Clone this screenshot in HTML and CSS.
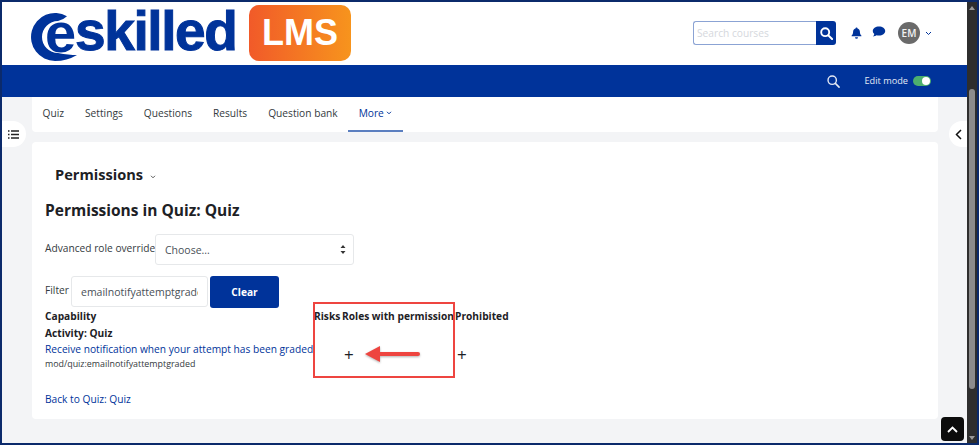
FILE: index.html
```html
<!DOCTYPE html>
<html lang="en">
<head>
    <meta charset="UTF-8">
    <title>Permissions in Quiz: Quiz</title>
    <link rel="stylesheet" href="styles.css">
</head>
<body>
    <div class="frame">
        <div class="page">
            <header class="topbar">
                <div class="logo">
                    <svg class="logo-e" width="48" height="74" viewBox="0 -12 48 74">
                        <path d="M36 4.200A24 24 0 1 0 24 49Q36 49 46 43Q38 43 27 41A16 16 0 0 1 27 9Q32 8 36 4.200z" fill="#00339a"/>
                        <text x="14" y="39.500" class="logo-e-text">e</text>
                    </svg>
                    <span class="logo-name">skilled</span>
                    <span class="logo-badge">LMS</span>
                </div>
                <div class="top-actions">
                    <div class="search-box">
                        <input type="text" placeholder="Search courses">
                        <button type="button">
                            <svg width="13" height="13" viewBox="0 0 14 14"><circle cx="5.6" cy="5.6" r="4.3" fill="none" stroke="#fff" stroke-width="2"/><path d="M9 9l4 4" stroke="#fff" stroke-width="2.2" stroke-linecap="round"/></svg>
                        </button>
                    </div>
                    <svg class="bell" width="11" height="12" viewBox="0 0 11 12"><path d="M5.5 0.5c.6 0 1 .4 1 .9 1.600.4 2.400 1.700 2.400 3.300 0 2 .6 3 1.500 3.800v.7H.6v-.7c.9-.8 1.500-1.800 1.500-3.800 0-1.600.8-2.900 2.400-3.300 0-.5.4-.9 1-.9z" fill="#00339a"/><path d="M4 10.300h3a1.500 1.500 0 0 1-3 0z" fill="#00339a"/></svg>
                    <svg class="chat" width="14" height="12" viewBox="0 0 13 12"><path d="M6.500 0.500C3 .5.300 2.500.300 5c0 1.200.6 2.200 1.500 3-.2 1-.8 1.900-1.300 2.500 1.300-.1 2.700-.6 3.500-1.200.8.2 1.600.3 2.500.3 3.500 0 6.200-2 6.200-4.600S10 .5 6.500.5z" fill="#00339a"/></svg>
                    <span class="avatar">EM</span>
                    <svg class="chev-small" width="7" height="5" viewBox="0 0 7 5"><path d="M1 1l2.500 2.500L6 1" fill="none" stroke="#00339a" stroke-width="1"/></svg>
                </div>
            </header>
            <div class="bluebar">
                <svg width="13" height="13" viewBox="0 0 14 14"><circle cx="5.600" cy="5.600" r="4.500" fill="none" stroke="#e4e9f4" stroke-width="1.500"/><path d="M9 9l4 4" stroke="#e4e9f4" stroke-width="1.700" stroke-linecap="round"/></svg>
                <span class="edit-label">Edit mode</span>
                <span class="toggle"><span class="toggle-knob"></span></span>
            </div>
            <main class="main">
                <nav class="tabs">
                    <a>Quiz</a>
                    <a>Settings</a>
                    <a>Questions</a>
                    <a>Results</a>
                    <a>Question bank</a>
                    <a class="active">More <svg width="6" height="4" viewBox="0 0 7 5"><path d="M1 1l2.500 2.500L6 1" fill="none" stroke="#00339a" stroke-width="1.200"/></svg></a>
                </nav>
                <section class="card">
                    <div class="tertiary">Permissions <svg width="6" height="4" viewBox="0 0 7 5"><path d="M1 1l2.500 2.500L6 1" fill="none" stroke="#444" stroke-width="1.100"/></svg></div>
                    <h2>Permissions in Quiz: Quiz</h2>
                    <div class="role-row">
                        <label>Advanced role override</label>
                        <div class="select-box">
                            <span>Choose...</span>
                            <svg width="6" height="9" viewBox="0 0 6 9"><path d="M3 0l2.500 3h-5zM3 9L.5 6h5z" fill="#333"/></svg>
                        </div>
                    </div>
                    <div class="filter-row">
                        <label>Filter</label>
                        <input type="text" class="filter-input" value="emailnotifyattemptgraded">
                        <button type="button" class="btn-clear">Clear</button>
                    </div>
                    <div class="table-wrap">
                        <table>
                            <tr>
                                <th class="col-cap">Capability</th>
                                <th class="col-risks">Risks</th>
                                <th class="col-roles">Roles with permission</th>
                                <th>Prohibited</th>
                            </tr>
                            <tr><th colspan="4" class="activity">Activity: Quiz</th></tr>
                            <tr>
                                <td class="col-cap">
                                    <a class="cap-link">Receive notification when your attempt has been graded</a>
                                    <div class="cap-name">mod/quiz:emailnotifyattemptgraded</div>
                                </td>
                                <td></td>
                                <td class="plus">+</td>
                                <td class="plus">+</td>
                            </tr>
                        </table>
                        <div class="callout"></div>
                        <svg class="arrow" width="57" height="18" viewBox="0 0 57 18">
                            <path d="M0 9L15 1v6h38q2 0 2 2t-2 2H15v6z" fill="#ee4540"/>
                        </svg>
                    </div>
                    <a class="back-link">Back to Quiz: Quiz</a>
                </section>
            </main>
            <button type="button" class="drawer-btn left">
                <svg width="11" height="9" viewBox="0 0 11 9"><path d="M0 1h1.500M3 1h8M0 4.500h1.500M3 4.500h8M0 8h1.500M3 8h8" stroke="#222" stroke-width="1.600"/></svg>
            </button>
            <button type="button" class="drawer-btn right">
                <svg width="7" height="11" viewBox="0 0 7 11"><path d="M6 1L1.500 5.500 6 10" fill="none" stroke="#111" stroke-width="1.500"/></svg>
            </button>
            <button type="button" class="to-top">
                <svg width="11" height="7" viewBox="0 0 11 7"><path d="M1 6l4.500-4.500L10 6" fill="none" stroke="#fff" stroke-width="1.800"/></svg>
            </button>
        </div>
        <div class="scrollbar">
            <span class="arrow-up"></span>
            <span class="thumb"></span>
            <span class="arrow-down"></span>
        </div>
    </div>
</body>
</html>
```

FILE: styles.css
```css
* {
    box-sizing: border-box;
}
body {
    margin: 0;
    font-family: "Open Sans", "Liberation Sans", sans-serif;
    font-size: 10.2px;
    color: #1d2125;
    overflow: hidden;
}
.frame {
    width: 979px;
    height: 445px;
    border: 2px solid #0b2a6b;
    display: flex;
    overflow: hidden;
}
.page {
    position: relative;
    width: 965px;
    background-color: #f3f4f6;
}
.topbar {
    height: 63px;
    background-color: #fff;
    display: flex;
    justify-content: space-between;
    padding-left: 29px;
}
.logo {
    display: flex;
    align-items: flex-start;
    height: 62px;
}
.logo-e {
    margin-top: -2px;
    flex-shrink: 0;
}
.logo-e-text {
    font-family: "Liberation Sans", sans-serif;
    font-weight: bold;
    font-size: 56px;
    fill: #00339a;
}
.logo-name {
    font-family: "Liberation Sans", sans-serif;
    font-weight: bold;
    font-size: 55px;
    line-height: 50px;
    letter-spacing: -1.4px;
    -webkit-text-stroke: 1px #00339a;
    color: #00339a;
    margin: 4px 0 0 -4px;
    width: 174px;
}
.logo-badge {
    width: 102px;
    height: 56px;
    margin-top: 3px;
    border-radius: 10px;
    background: linear-gradient(90deg, #f15a29, #f7941d);
    color: #fff;
    font-family: "Liberation Sans", sans-serif;
    font-weight: bold;
    font-size: 36px;
    line-height: 56px;
    text-align: center;
}
.top-actions {
    display: flex;
    align-items: center;
    padding: 0 35px 0 0;
    height: 62px;
}
.search-box {
    display: flex;
    width: 143px;
    height: 24px;
    margin-right: 15px;
}
.search-box input {
    width: 123px;
    border: 1px solid #8ba3d4;
    border-right: none;
    border-radius: 3px 0 0 3px;
    padding: 0 3px;
    font-family: inherit;
    font-size: 10.2px;
    outline: none;
}
.search-box input::placeholder {
    color: #d5d8dd;
}
.search-box button {
    width: 20px;
    border: none;
    padding: 0;
    background-color: #00339a;
    border-radius: 0 3px 3px 0;
    display: flex;
    align-items: center;
    justify-content: center;
}
.bell {
    margin-right: 10px;
}
.chat {
    margin-right: 12px;
    margin-top: -2px;
}
.avatar {
    width: 22px;
    height: 22px;
    border-radius: 50%;
    background-color: #6a6a6a;
    color: #f2f2f2;
    font-size: 10px;
    font-weight: 600;
    display: flex;
    align-items: center;
    justify-content: center;
    margin-right: 5px;
}
.bluebar {
    height: 32px;
    background-color: #00339a;
    display: flex;
    align-items: center;
    justify-content: flex-end;
    padding-right: 36px;
}
.edit-label {
    color: #e4e9f4;
    font-size: 9.2px;
    margin: 0 5px 2px 24px;
}
.toggle {
    display: block;
    width: 18px;
    height: 10px;
    border-radius: 5px;
    background-color: #4caf6e;
    position: relative;
}
.toggle-knob {
    position: absolute;
    right: 1px;
    top: 1px;
    width: 8px;
    height: 8px;
    border-radius: 50%;
    background-color: #fff;
}
.main {
    padding: 0 29px 0 30px;
}
.tabs {
    height: 35px;
    background-color: #fff;
    border-radius: 0 0 4px 4px;
    display: flex;
    margin-bottom: 10px;
    font-size: 10.2px;
}
.tabs a {
    padding: 0 10.5px;
    line-height: 32px;
    color: #343a40;
}
.tabs a.active {
    color: #00339a;
    border-bottom: 2px solid #5b7fc0;
    height: 35px;
}
.tabs a svg {
    vertical-align: 2px;
}
.card {
    height: 277px;
    background-color: #fff;
    border-radius: 4px;
    padding: 22px 13px 0;
}
.tertiary {
    font-size: 14.6px;
    font-weight: 700;
    line-height: 20px;
    padding-left: 10px;
    color: #1d2125;
}
.tertiary svg {
    margin-left: 3px;
    vertical-align: 1px;
}
h2 {
    font-size: 15.5px;
    font-weight: 700;
    line-height: 22px;
    margin: 15px 0 13px;
}
.role-row {
    display: flex;
    align-items: flex-start;
    margin-bottom: 11px;
}
.role-row label {
    width: 110px;
    white-space: nowrap;
    line-height: 28px;
    color: #343a40;
}
.select-box {
    width: 199px;
    height: 31px;
    border: 1px solid #e6e8ea;
    border-radius: 3px;
    display: flex;
    align-items: center;
    justify-content: space-between;
    padding: 0 7px 0 9px;
    color: #495057;
    font-size: 10.5px;
}
.filter-row {
    display: flex;
    align-items: flex-start;
}
.filter-row label {
    width: 26px;
    line-height: 28px;
    color: #343a40;
}
.filter-input {
    width: 137px;
    height: 31px;
    border: 1px solid #e6e8ea;
    border-radius: 3px;
    padding: 0 9px;
    font-family: inherit;
    font-size: 10.5px;
    color: #495057;
    margin-right: 2px;
    outline: none;
}
.btn-clear {
    width: 69px;
    height: 32px;
    border: none;
    border-radius: 3px;
    background-color: #00339a;
    color: #fff;
    font-family: inherit;
    font-size: 10.2px;
    font-weight: 700;
}
.table-wrap {
    position: relative;
}
table {
    border-collapse: collapse;
}
th, td {
    padding: 0;
    text-align: left;
    vertical-align: top;
    white-space: nowrap;
}
th {
    font-weight: 700;
    line-height: 17px;
}
.col-cap {
    width: 269px;
    min-width: 269px;
}
.col-risks {
    width: 28px;
    min-width: 28px;
}
.col-roles {
    width: 113px;
    min-width: 113px;
}
.activity {
    line-height: 16px;
}
.cap-link {
    display: block;
    color: #00339a;
    line-height: 16px;
}
.cap-name {
    font-size: 8.9px;
    line-height: 13px;
    color: #343a40;
}
td.plus {
    font-size: 17px;
    line-height: 16px;
    padding: 6px 0 0 2px;
}
.callout {
    position: absolute;
    left: 268px;
    top: -6px;
    width: 142px;
    height: 76px;
    border: 2px solid #ee4540;
}
.arrow {
    position: absolute;
    left: 320px;
    top: 37px;
    filter: drop-shadow(0 1px 1px rgba(0, 0, 0, 0.3));
}
.back-link {
    display: block;
    color: #00339a;
    margin-top: 21px;
    line-height: 16px;
}
.drawer-btn {
    position: absolute;
    top: 119px;
    width: 26px;
    height: 26px;
    border: none;
    padding: 0;
    background-color: #fff;
    display: flex;
    align-items: center;
    justify-content: center;
}
.drawer-btn.left {
    left: -2px;
    border-radius: 0 13px 13px 0;
}
.drawer-btn.right {
    right: 0;
    width: 18px;
    border-radius: 13px 0 0 13px;
}
.to-top {
    position: absolute;
    left: 939px;
    top: 415px;
    width: 23px;
    height: 24px;
    border: none;
    padding: 0;
    border-radius: 4px;
    background-color: #0c0c0c;
    display: flex;
    align-items: center;
    justify-content: center;
}
.scrollbar {
    width: 10px;
    background-color: #2e2e2e;
    position: relative;
    flex-shrink: 0;
}
.thumb {
    position: absolute;
    left: 2px;
    right: 2px;
    top: 87px;
    height: 300px;
    background-color: #8c8c8c;
    border-radius: 3px;
}
.arrow-up, .arrow-down {
    position: absolute;
    left: 2px;
    border-left: 3px solid transparent;
    border-right: 3px solid transparent;
}
.arrow-up {
    top: 4px;
    border-bottom: 4px solid #9a9a9a;
}
.arrow-down {
    bottom: 3px;
    border-top: 4px solid #9a9a9a;
}
```
